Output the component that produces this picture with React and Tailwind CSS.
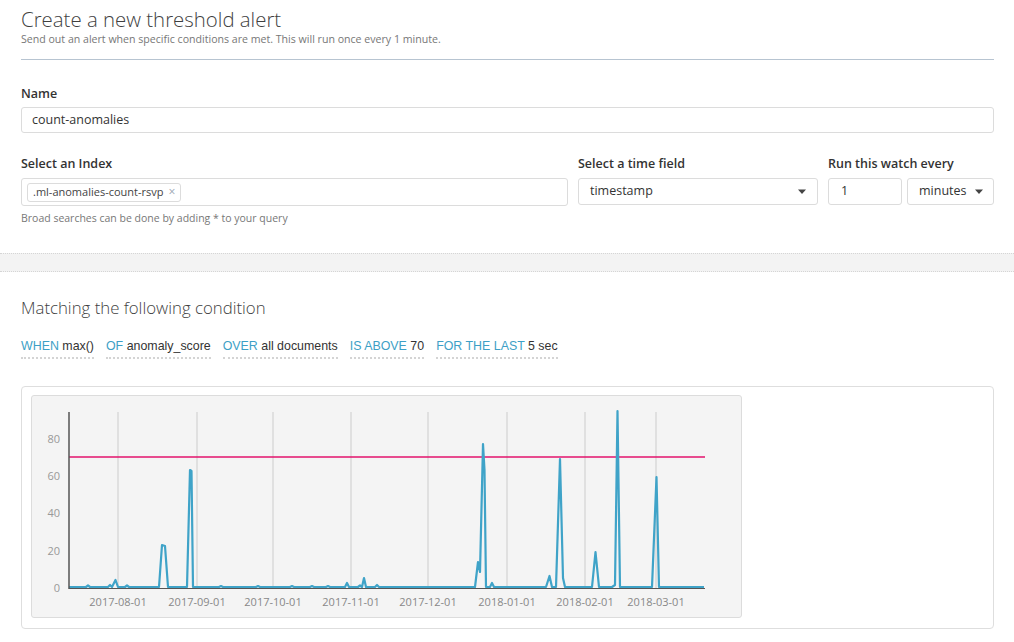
import React from "react";

const gridLines = [
  { x: 118, label: "2017-08-01" },
  { x: 197, label: "2017-09-01" },
  { x: 273, label: "2017-10-01" },
  { x: 351, label: "2017-11-01" },
  { x: 428, label: "2017-12-01" },
  { x: 507, label: "2018-01-01" },
  { x: 585, label: "2018-02-01" },
  { x: 656, label: "2018-03-01" },
];

const yTicks = [
  { y: 588, label: "0" },
  { y: 551, label: "20" },
  { y: 513, label: "40" },
  { y: 476, label: "60" },
  { y: 439, label: "80" },
];

// series points in page pixels, baseline at 587
const points = [
  [69, 587], [86, 587], [88, 585.5], [90, 587],
  [108, 587], [110, 585], [112, 587], [115.5, 580], [118, 587],
  [125, 587], [127, 585.5], [129, 587],
  [159, 587], [162, 545], [165, 546], [168, 587],
  [187, 587], [190, 470], [191.5, 471], [193, 587],
  [219, 587], [221, 586], [223, 587],
  [256, 587], [258, 586], [260, 587],
  [290, 587], [292, 586], [294, 587],
  [310, 587], [312, 586], [314, 587],
  [326, 587], [328, 586], [330, 587],
  [345, 587], [347, 583], [349, 587],
  [358, 587], [360, 585.5], [362, 587], [364, 578], [366, 587],
  [375, 587], [377, 585], [379, 587],
  [475, 587], [478, 562], [480, 572], [483, 444], [484.5, 470], [486, 587],
  [490, 587], [492, 583], [494, 587],
  [546, 587], [549.5, 576], [552, 587],
  [556, 587], [560, 459], [563, 578], [565, 587],
  [592, 587], [595.5, 552], [599, 587],
  [612, 587], [615, 585], [617.5, 411], [620, 587],
  [652, 587], [656.5, 477], [659, 587],
  [704, 587],
];

const conditions = [
  ["WHEN", "max()"],
  ["OF", "anomaly_score"],
  ["OVER", "all documents"],
  ["IS ABOVE", "70"],
  ["FOR THE LAST", "5 sec"],
];

const Caret = () => (
  <svg width="10" height="6" viewBox="0 0 10 6" className="shrink-0">
    <path d="M1 0.5h8L5 5z" fill="#444" />
  </svg>
);

const Chart = () => (
  <svg width="708" height="220" viewBox="32 396 708 220" className="block">
    {gridLines.map((g) => (
      <line key={g.x} x1={g.x} y1="412" x2={g.x} y2="588" stroke="#e0e0e0" strokeWidth="2" />
    ))}
    <line x1="69" y1="457" x2="705" y2="457" stroke="#e3136d" strokeWidth="1.5" />
    <polyline
      points={points.map((p) => p.join(",")).join(" ")}
      fill="none"
      stroke="#3fa3c8"
      strokeWidth="2.2"
      strokeLinejoin="round"
    />
    <line x1="69" y1="412" x2="69" y2="589" stroke="#555" strokeWidth="1.5" />
    <line x1="69" y1="588.5" x2="705" y2="588.5" stroke="#555" strokeWidth="1.2" />
    {yTicks.map((t) => (
      <text key={t.label} x="60" y={t.y + 4} textAnchor="end" fontSize="11" fill="#999" fontFamily="Open Sans, sans-serif">
        {t.label}
      </text>
    ))}
    {gridLines.map((g) => (
      <text key={g.label} x={g.x} y="606" textAnchor="middle" fontSize="11" fill="#888" fontFamily="Open Sans, sans-serif">
        {g.label}
      </text>
    ))}
  </svg>
);

export default function App() {
  return (
    <div className="w-[1014px] h-[642px] overflow-hidden bg-white text-[#333] font-['Open_Sans',sans-serif]">
      <div className="px-[21px] pr-[20px]">
        {/* Header */}
        <div className="pt-[5px] pb-[14px] border-b border-[#b7c4d1]">
          <h1 className="text-[20.4px] font-light leading-[28px] text-[#3f3f3f]">Create a new threshold alert</h1>
          <p className="text-[10.6px] leading-[12px] text-[#777]">
            Send out an alert when specific conditions are met. This will run once every 1 minute.
          </p>
        </div>

        {/* Name */}
        <div className="mt-[26px]">
          <label className="block text-[12.5px] font-semibold leading-[16px] text-[#333]">Name</label>
          <div className="mt-[5px] h-[26px] border border-[#dcdcdc] rounded-[3px] flex items-center px-[10px] text-[12.5px] text-[#333]">
            count-anomalies
          </div>
        </div>

        {/* Index / time / interval */}
        <div className="mt-[23px] flex gap-[10px]">
          <div className="w-[547px]">
            <label className="block text-[12.5px] font-semibold leading-[16px]">Select an Index</label>
            <div className="mt-[6px] h-[28px] border border-[#dcdcdc] rounded-[3px] flex items-center px-[5px]">
              <span className="h-[19px] px-[5px] border border-[#dcdcdc] rounded-[3px] flex items-center gap-[5px] text-[11px] text-[#444]">
                .ml-anomalies-count-rsvp
                <span className="text-[#9aa6b2] text-[12px] leading-none">×</span>
              </span>
            </div>
            <p className="mt-[5px] text-[10.5px] leading-[14px] text-[#777]">Broad searches can be done by adding * to your query</p>
          </div>
          <div className="w-[240px]">
            <label className="block text-[12.5px] font-semibold leading-[16px]">Select a time field</label>
            <div className="mt-[6px] h-[27px] border border-[#dcdcdc] rounded-[3px] flex items-center justify-between pl-[11px] pr-[10px] text-[12.5px]">
              timestamp
              <Caret />
            </div>
          </div>
          <div className="w-[166px]">
            <label className="block text-[12.5px] font-semibold leading-[16px]">Run this watch every</label>
            <div className="mt-[6px] flex gap-[5px]">
              <div className="w-[74px] h-[27px] border border-[#dcdcdc] rounded-[3px] flex items-center px-[12px] text-[12.5px]">1</div>
              <div className="flex-1 h-[27px] border border-[#dcdcdc] rounded-[3px] flex items-center justify-between pl-[11px] pr-[9px] text-[12.5px]">
                minutes
                <Caret />
              </div>
            </div>
          </div>
        </div>
      </div>

      {/* Divider band */}
      <div className="mt-[28px] h-[19px] bg-[#f3f3f3] border-y border-dotted border-[#d5d5d5]" />

      <div className="px-[21px] pr-[20px]">
        <h2 className="mt-[25px] text-[16.8px] font-light leading-[22px] text-[#3f3f3f]">Matching the following condition</h2>

        <div className="mt-[18px] flex gap-[12px] text-[12.4px] leading-[18px] font-['Liberation_Sans',sans-serif]">
          {conditions.map(([k, v]) => (
            <span key={k} className="pb-[2px] border-b-2 border-dotted border-[#d4d4d4]">
              <span className="text-[#3d9fc6]">{k}</span> <span className="text-[#333]">{v}</span>
            </span>
          ))}
        </div>

        {/* Chart */}
        <div className="mt-[27px] h-[243px] border border-[#dedede] rounded-[4px] pt-[8px] px-[9px]">
          <div className="w-[711px] h-[223px] bg-[#f4f4f4] border border-[#dcdcdc] rounded-[3px]">
            <Chart />
          </div>
        </div>
      </div>
    </div>
  );
}
